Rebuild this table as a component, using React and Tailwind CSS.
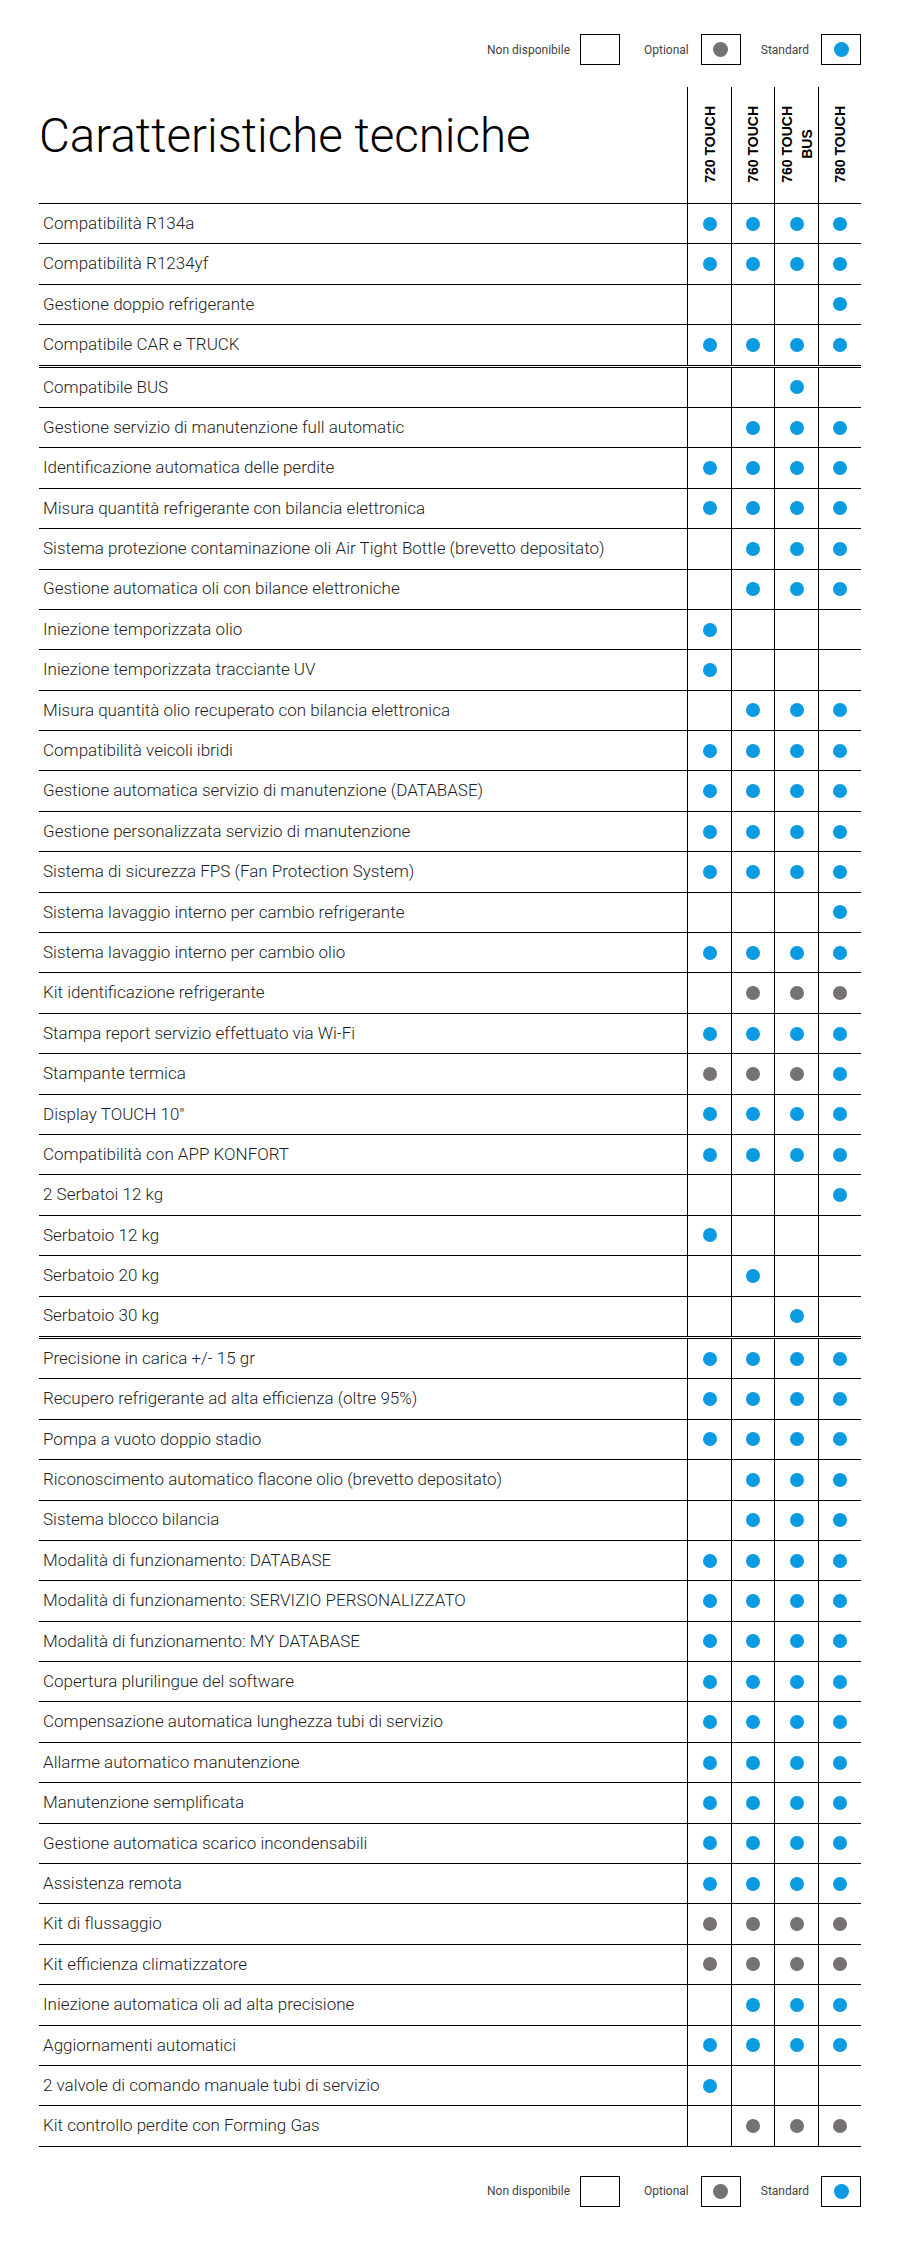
import React from "react";

const ROWS = [
  ["Compatibilità R134a", "BBBB"],
  ["Compatibilità R1234yf", "BBBB"],
  ["Gestione doppio refrigerante", "---B"],
  ["Compatibile CAR e TRUCK", "BBBB", true],
  ["Compatibile BUS", "--B-"],
  ["Gestione servizio di manutenzione full automatic", "-BBB"],
  ["Identificazione automatica delle perdite", "BBBB"],
  ["Misura quantità refrigerante con bilancia elettronica", "BBBB"],
  ["Sistema protezione contaminazione oli Air Tight Bottle (brevetto depositato)", "-BBB"],
  ["Gestione automatica oli con bilance elettroniche", "-BBB"],
  ["Iniezione temporizzata olio", "B---"],
  ["Iniezione temporizzata tracciante UV", "B---"],
  ["Misura quantità olio recuperato con bilancia elettronica", "-BBB"],
  ["Compatibilità veicoli ibridi", "BBBB"],
  ["Gestione automatica servizio di manutenzione (DATABASE)", "BBBB"],
  ["Gestione personalizzata servizio di manutenzione", "BBBB"],
  ["Sistema di sicurezza FPS (Fan Protection System)", "BBBB"],
  ["Sistema lavaggio interno per cambio refrigerante", "---B"],
  ["Sistema lavaggio interno per cambio olio", "BBBB"],
  ["Kit identificazione refrigerante", "-GGG"],
  ["Stampa report servizio effettuato via Wi-Fi", "BBBB"],
  ["Stampante termica", "GGGB"],
  ["Display TOUCH 10''", "BBBB"],
  ["Compatibilità con APP KONFORT", "BBBB"],
  ["2 Serbatoi 12 kg", "---B"],
  ["Serbatoio 12 kg", "B---"],
  ["Serbatoio 20 kg", "-B--"],
  ["Serbatoio 30 kg", "--B-", true],
  ["Precisione in carica +/- 15 gr", "BBBB"],
  ["Recupero refrigerante ad alta efficienza (oltre 95%)", "BBBB"],
  ["Pompa a vuoto doppio stadio", "BBBB"],
  ["Riconoscimento automatico flacone olio (brevetto depositato)", "-BBB"],
  ["Sistema blocco bilancia", "-BBB"],
  ["Modalità di funzionamento: DATABASE", "BBBB"],
  ["Modalità di funzionamento: SERVIZIO PERSONALIZZATO", "BBBB"],
  ["Modalità di funzionamento: MY DATABASE", "BBBB"],
  ["Copertura plurilingue del software", "BBBB"],
  ["Compensazione automatica lunghezza tubi di servizio", "BBBB"],
  ["Allarme automatico manutenzione", "BBBB"],
  ["Manutenzione semplificata", "BBBB"],
  ["Gestione automatica scarico incondensabili", "BBBB"],
  ["Assistenza remota", "BBBB"],
  ["Kit di flussaggio", "GGGG"],
  ["Kit efficienza climatizzatore", "GGGG"],
  ["Iniezione automatica oli ad alta precisione", "-BBB"],
  ["Aggiornamenti automatici", "BBBB"],
  ["2 valvole di comando manuale tubi di servizio", "B---"],
  ["Kit controllo perdite con Forming Gas", "-GGG"],
];

const COL_W = ["w-[44px]", "w-[43px]", "w-[44px]", "w-[43px]"];

function Dot({ kind }) {
  if (kind === "B") return <span className="block w-[14px] h-[14px] rounded-full bg-[#0b9be2]" />;
  if (kind === "G") return <span className="block w-[14px] h-[14px] rounded-full bg-[#767272]" />;
  return null;
}

function Legend() {
  return (
    <div className="flex justify-end items-center h-[31px] text-[12px] text-[#444] font-['Roboto',sans-serif]">
      <span className="mr-[10px]">Non disponibile</span>
      <div className="w-[40px] h-[31px] border border-black" />
      <span className="ml-[24px] mr-[12px]">Optional</span>
      <div className="w-[40px] h-[31px] border border-black flex items-center justify-center">
        <span className="block w-[15px] h-[15px] rounded-full bg-[#767272]" />
      </div>
      <span className="ml-[20px] mr-[12px]">Standard</span>
      <div className="w-[40px] h-[31px] border border-black flex items-center justify-center">
        <span className="block w-[15px] h-[15px] rounded-full bg-[#0b9be2]" />
      </div>
    </div>
  );
}

function HeadCell({ w, children }) {
  return (
    <div className={`${w} border-l border-black flex flex-col justify-end items-center pb-[20px]`}>
      <span className="[writing-mode:vertical-rl] rotate-180 text-[14px] font-bold leading-[20px] text-center text-black font-['Liberation_Sans',Arial,sans-serif]">
        {children}
      </span>
    </div>
  );
}

export default function App() {
  return (
    <div className="w-[900px] min-h-[2268px] bg-white pt-[34px] px-[39px] font-['Roboto',sans-serif]">
      <Legend />
      <div className="mt-[22px]">
        <div className="flex h-[117px] border-b border-black">
          <div className="flex-1 pt-[26px]">
            <h1 className="text-[47.5px] leading-[47px] font-light text-black">Caratteristiche tecniche</h1>
          </div>
          <HeadCell w={COL_W[0]}>720 TOUCH</HeadCell>
          <HeadCell w={COL_W[1]}>760 TOUCH</HeadCell>
          <HeadCell w={COL_W[2]}>
            760 TOUCH
            <br />
            BUS
          </HeadCell>
          <HeadCell w={COL_W[3]}>780 TOUCH</HeadCell>
        </div>
        {ROWS.map(([label, vals, dbl], i) => (
          <div
            key={i}
            className={
              dbl
                ? "flex h-[42.4px] border-b-[3px] border-double border-black"
                : "flex h-[40.4px] border-b border-black"
            }
          >
            <div className="flex-1 flex items-center pl-[4px] text-[17px] font-light text-[#1e1e1e]">{label}</div>
            {vals.split("").map((v, j) => (
              <div key={j} className={`${COL_W[j]} border-l border-black flex items-center justify-center`}>
                <Dot kind={v} />
              </div>
            ))}
          </div>
        ))}
      </div>
      <div className="mt-[29px]">
        <Legend />
      </div>
    </div>
  );
}
